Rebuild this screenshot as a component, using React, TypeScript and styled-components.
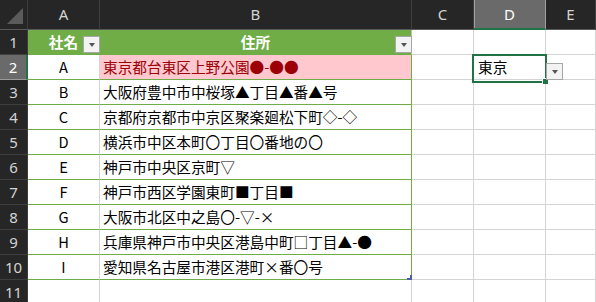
import styled, { createGlobalStyle } from 'styled-components';

const GlobalStyle = createGlobalStyle`
  html, body {
    margin: 0;
    padding: 0;
    background: #ffffff;
    overflow: hidden;
  }
`;

const JP = `"Noto Sans CJK JP", "Noto Sans", sans-serif`;
const UI = `"Noto Sans", "Liberation Sans", sans-serif`;

const GREEN = '#70ad47';
const GRID = '#d4d4d4';
const SELECT = '#217346';

const COLUMNS = ['A', 'B', 'C', 'D', 'E'];

const ROWS: { id: string; address: string; hit?: boolean }[] = [
  { id: 'A', address: '東京都台東区上野公園●-●●', hit: true },
  { id: 'B', address: '大阪府豊中市中桜塚▲丁目▲番▲号' },
  { id: 'C', address: '京都府京都市中京区聚楽廻松下町◇-◇' },
  { id: 'D', address: '横浜市中区本町〇丁目〇番地の〇' },
  { id: 'E', address: '神戸市中央区京町▽' },
  { id: 'F', address: '神戸市西区学園東町■丁目■' },
  { id: 'G', address: '大阪市北区中之島〇-▽-×' },
  { id: 'H', address: '兵庫県神戸市中央区港島中町□丁目▲-●' },
  { id: 'I', address: '愛知県名古屋市港区港町×番〇号' },
];

const Sheet = styled.div`
  width: 596px;
  height: 302px;
  overflow: hidden;
  display: grid;
  grid-template-columns: 28px 72px 312px 62px 72px 1fr;
  grid-template-rows: 30px repeat(11, 25px);
  background: #ffffff;
`;

const Corner = styled.div`
  background: #262626;
  border-right: 1px solid #3c3c3c;
  border-bottom: 1px solid #5a5a5a;
  box-sizing: border-box;
  display: flex;
  align-items: flex-end;
  justify-content: flex-end;
  padding: 0 3px 4px 0;
`;

const ColHeader = styled.div<{ $active?: boolean }>`
  box-sizing: border-box;
  background: ${(p) => (p.$active ? '#6a6a6a' : '#262626')};
  color: ${(p) => (p.$active ? '#ffffff' : '#d4d4d4')};
  border-right: 1px solid ${(p) => (p.$active ? '#a0a0a0' : '#3f3f3f')};
  border-bottom: ${(p) => (p.$active ? `2px solid ${SELECT}` : '1px solid #5a5a5a')};
  box-shadow: ${(p) => (p.$active ? 'inset 1px 0 0 #a0a0a0' : 'none')};
  font-family: ${UI};
  font-size: 15px;
  display: flex;
  align-items: center;
  justify-content: center;
  padding-bottom: ${(p) => (p.$active ? '0' : '1px')};
`;

const RowHeader = styled.div<{ $active?: boolean }>`
  box-sizing: border-box;
  background: ${(p) => (p.$active ? '#6a6a6a' : '#262626')};
  color: ${(p) => (p.$active ? '#ffffff' : '#d4d4d4')};
  border-bottom: 1px solid ${(p) => (p.$active ? '#9a9a9a' : '#3f3f3f')};
  border-right: ${(p) => (p.$active ? `2px solid ${SELECT}` : '1px solid #3c3c3c')};
  font-family: ${UI};
  font-size: 15px;
  display: flex;
  align-items: center;
  justify-content: center;
`;

const HeadCell = styled.div<{ $last?: boolean }>`
  position: relative;
  box-sizing: border-box;
  background: ${GREEN};
  color: #ffffff;
  font-family: ${JP};
  font-weight: 700;
  font-size: 14.67px;
  border-right: 1px solid ${(p) => (p.$last ? '#b8c9a8' : GREEN)};
  border-bottom: 1px solid ${GREEN};
  display: flex;
  align-items: center;
  justify-content: center;
  padding-bottom: 1px;
`;

const BodyCell = styled.div<{ $col: 'A' | 'B'; $hit?: boolean; $last?: boolean }>`
  position: relative;
  box-sizing: border-box;
  background: ${(p) => (p.$hit && p.$col === 'B' ? '#ffc7ce' : '#ffffff')};
  color: ${(p) => (p.$hit && p.$col === 'B' ? '#9c0006' : '#000000')};
  font-family: ${JP};
  font-size: 14.67px;
  white-space: nowrap;
  border-right: 1px solid ${(p) => (p.$col === 'B' ? GREEN : GRID)};
  border-bottom: 1px solid ${(p) => (p.$last ? GREEN : GREEN)};
  display: flex;
  align-items: center;
  justify-content: ${(p) => (p.$col === 'A' ? 'center' : 'flex-start')};
  padding-left: ${(p) => (p.$col === 'B' ? '3px' : '0')};
  padding-bottom: 1px;
`;

const GridCell = styled.div`
  position: relative;
  box-sizing: border-box;
  background: #ffffff;
  color: #000000;
  font-family: ${JP};
  font-size: 14.67px;
  border-right: 1px solid ${GRID};
  border-bottom: 1px solid ${GRID};
  display: flex;
  align-items: center;
  padding-left: 4px;
  padding-bottom: 1px;
`;

const FilterButton = styled.div`
  position: absolute;
  right: -1px;
  bottom: 1px;
  width: 17px;
  height: 17px;
  box-sizing: border-box;
  background: #f3f3f3;
  border: 1px solid #a6a6a6;
  display: flex;
  align-items: center;
  justify-content: center;

  &::after {
    content: '';
    border-top: 4px solid #555555;
    border-left: 3.5px solid transparent;
    border-right: 3.5px solid transparent;
    margin-top: 1px;
  }
`;

const ListButton = styled(FilterButton)`
  right: auto;
  bottom: auto;
  left: 72px;
  top: 8px;
  z-index: 3;
`;

const Selection = styled.div`
  position: absolute;
  left: -2px;
  top: -1px;
  width: 75px;
  height: 29px;
  box-sizing: border-box;
  border: 2px solid ${SELECT};
  z-index: 2;
  pointer-events: none;

  &::after {
    content: '';
    position: absolute;
    right: -3px;
    bottom: -3px;
    width: 5px;
    height: 5px;
    background: ${SELECT};
    border-left: 1px solid #ffffff;
    border-top: 1px solid #ffffff;
  }
`;

const ResizeMark = styled.svg`
  position: absolute;
  right: -1px;
  bottom: -1px;
`;

const CornerMark = () => (
  <svg width="17" height="17" viewBox="0 0 17 17">
    <polygon points="16,0 16,16 0,16" fill="#5b5b5b" />
  </svg>
);

export default function App() {
  return (
    <>
      <GlobalStyle />
      <Sheet>
        <Corner>
          <CornerMark />
        </Corner>
        {COLUMNS.map((c) => (
          <ColHeader key={c} $active={c === 'D'}>
            {c}
          </ColHeader>
        ))}

        <RowHeader>1</RowHeader>
        <HeadCell>
          社名
          <FilterButton />
        </HeadCell>
        <HeadCell $last>
          住所
          <FilterButton />
        </HeadCell>
        <GridCell />
        <GridCell />
        <GridCell />

        {ROWS.map((r, i) => (
          <Row key={r.id} n={i + 2} id={r.id} address={r.address} hit={r.hit} last={i === ROWS.length - 1} />
        ))}

        <RowHeader>11</RowHeader>
        <GridCell />
        <GridCell />
        <GridCell />
        <GridCell />
        <GridCell />
      </Sheet>
    </>
  );
}

const Row = ({ n, id, address, hit, last }: { n: number; id: string; address: string; hit?: boolean; last?: boolean }) => (
  <>
    <RowHeader $active={n === 2}>{n}</RowHeader>
    <BodyCell $col="A" $hit={hit}>
      {id}
    </BodyCell>
    <BodyCell $col="B" $hit={hit} $last={last}>
      {address}
      {last && (
        <ResizeMark width="5" height="5" viewBox="0 0 5 5">
          <path d="M3 0H5V5H0V3H3Z" fill="#4b5fae" />
        </ResizeMark>
      )}
    </BodyCell>
    <GridCell />
    <GridCell>
      {n === 2 && (
        <>
          東京
          <Selection />
          <ListButton />
        </>
      )}
    </GridCell>
    <GridCell />
  </>
);
